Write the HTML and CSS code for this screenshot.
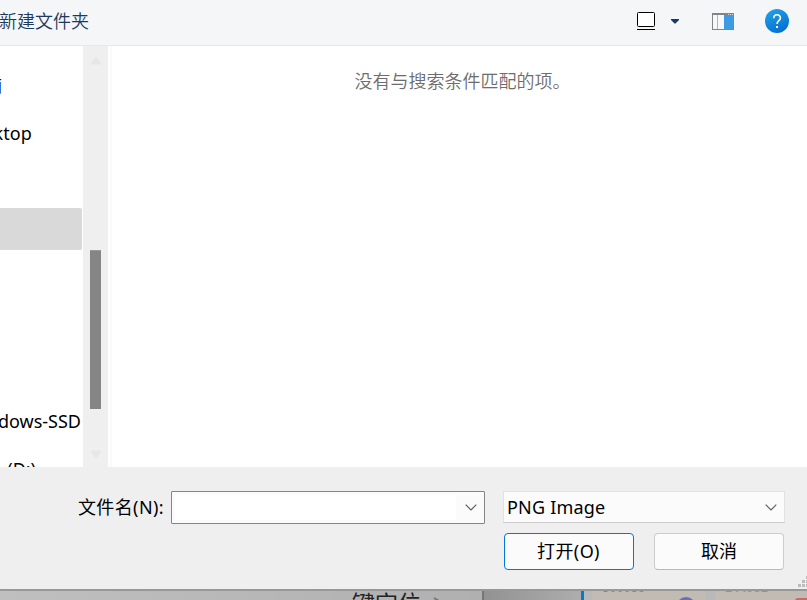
FILE: index.html
```html
<!DOCTYPE html>
<html lang="zh-CN">
<head>
<meta charset="utf-8">
<title>打开</title>
<link rel="stylesheet" href="styles.css">
</head>
<body>
<div class="dialog">
  <header class="toolbar">
    <span class="new-folder">新建文件夹</span>
    <div class="tools">
      <svg class="view-icon" width="24" height="24" viewBox="0 0 24 24"><rect width="24" height="24" rx="2" fill="#f6f5f6"/><rect x="3.500" y="3.500" width="17" height="14" rx="1" fill="#fff" stroke="#000"/><path d="M3 20.500h18" stroke="#000"/></svg>
      <svg class="caret-icon" width="8" height="5" viewBox="0 0 8 5"><path d="M0 0h8v1L4.500 4.500h-1L0 1z" fill="#1e395b"/></svg>
      <svg class="pane-icon" width="22" height="17" viewBox="0 0 22 17"><path d="M0 0h22v17H0z" fill="#818589"/><path d="M1 2h4v14H1zM6 2h6v14H6z" fill="#f8f8f8"/><path d="M5 2h1v14H5z" fill="#b5b5b5"/><path d="M12 2h9v14h-9z" fill="#3f9ae5"/><path d="M16 1.500h1m1 0h1m1 0h1" stroke="#ddd"/></svg>
      <svg class="help-icon" width="24" height="24" viewBox="0 0 24 24"><defs><linearGradient id="help" x1="0" y1="0" x2=".5" y2="1"><stop stop-color="#24a5e8"/><stop offset="1" stop-color="#0673d2"/></linearGradient></defs><circle cx="12" cy="12" r="12" fill="url(#help)"/><path d="M8.800 9.200C8.800 4.700 15.400 4.700 15.400 8.900c0 2.800-3.400 2.700-3.400 6.200" fill="none" stroke="#fff" stroke-width="1.600"/><path d="M11 17h2v2h-2z" fill="#fff"/></svg>
    </div>
  </header>
  <main class="content">
    <nav class="tree">
      <div class="row"><span class="label pc">此电脑</span></div>
      <div class="row"><span class="label desktop">Desktop</span></div>
      <div class="row"></div>
      <div class="row selected"></div>
      <div class="row"></div>
      <div class="row"></div>
      <div class="row"></div>
      <div class="row"><span class="label system">Windows-SSD</span></div>
      <div class="row"><span class="label data">(D:)</span></div>
    </nav>
    <div class="scrollbar">
      <svg class="arrow" width="12" height="9" viewBox="0 0 12 9"><path d="M6 1 11 8H1z" fill="#e7e7e7" stroke="#e7e7e7" stroke-linejoin="round"/></svg>
      <div class="thumb"></div>
      <svg class="arrow down" width="12" height="9" viewBox="0 0 12 9"><path d="M6 8 11 1H1z" fill="#e7e7e7" stroke="#e7e7e7" stroke-linejoin="round"/></svg>
    </div>
    <div class="splitter"></div>
    <section class="files"><span class="empty">没有与搜索条件匹配的项。</span></section>
  </main>
  <footer class="footer">
    <div class="fields">
      <span class="name-label">文件名(N):</span>
      <div class="combo name"><div class="entry"></div><svg class="chevron" width="12" height="7" viewBox="0 0 12 7"><path d="m.7.700 5.300 5.300L11.300.700" fill="none" stroke="#606060" stroke-width="1.200"/></svg></div>
      <div class="combo type"><span class="type-text">PNG Image</span><svg class="chevron" width="12" height="7" viewBox="0 0 12 7"><path d="m.7.700 5.300 5.300L11.300.700" fill="none" stroke="#606060" stroke-width="1.200"/></svg></div>
    </div>
    <div class="buttons">
      <div class="button primary"><span class="open-text">打开(O)</span></div>
      <div class="button"><span class="cancel-text">取消</span></div>
    </div>
    <svg class="grip" width="9" height="11" viewBox="0 0 9 11"><path d="M8 0h1v3H8zM4 4h3v3H4zM8 4h1v3H8zM0 8h3v3H0zM4 8h3v3H4zM8 8h1v3H8z" fill="#bdbdbd"/></svg>
  </footer>
</div>
<div class="backdrop">
  <div class="back-left"><span class="back-text">键定位</span><svg class="back-arrow" width="8" height="8" viewBox="0 0 8 8"><path d="m1 1 5 3-5 3" fill="none" stroke="#777" stroke-width="2"/></svg></div>
  <div class="back-gap"></div>
  <div class="back-right">
    <div class="card"><span class="code blue">300059</span><i class="dot violet"></i></div>
    <div class="card second"><span class="code orange">144952</span><i class="dot red"></i></div>
  </div>
</div>
</body>
</html>
```
FILE: styles.css
```css
* { box-sizing: border-box; }
body {
  margin: 0;
  width: 807px;
  height: 600px;
  overflow: hidden;
  display: flex;
  flex-direction: column;
  font: 18px/24px "Noto Sans", "Noto Sans CJK SC", sans-serif;
  color: #000;
  background: #bbb;
}
svg { display: block; flex: none; }
.dialog { height: 589px; flex: none; display: flex; flex-direction: column; background: #efefef; }
.toolbar {
  height: 46px;
  flex: none;
  display: flex;
  justify-content: space-between;
  background: #f4f6f8;
  border-bottom: 1px solid #e4e7eb;
  color: #1e395b;
}
.new-folder { margin: 8px 0 0 -1px; font-family: "Noto Sans CJK SC", sans-serif; font-weight: 350; white-space: nowrap; }
.tools { display: flex; align-items: flex-start; padding-right: 18px; }
.view-icon { margin-top: 9px; }
.caret-icon { margin: 19px 0 0 13px; }
.pane-icon { margin: 13px 0 0 33px; }
.help-icon { margin: 9px 0 0 31px; }
.content { height: 421px; flex: none; display: flex; overflow: hidden; background: #fff; }
.tree { width: 83px; flex: none; padding-top: 15px; overflow: hidden; }
.row { width: 82px; height: 48px; display: flex; align-items: center; justify-content: flex-end; }
.row.selected { height: 42px; margin: 3px 0; background: #d9d9d9; border-radius: 0 2px 2px 0; }
.label { flex: none; white-space: nowrap; }
.pc { margin-right: 80px; color: #000040; }
.desktop { margin-right: 50px; letter-spacing: .1px; }
.system { margin-right: 1px; }
.data { margin-right: 46px; }
.scrollbar { width: 25px; flex: none; display: flex; flex-direction: column; align-items: center; padding: 10px 0 8px; background: #efefef; }
.arrow.down { margin-top: auto; }
.thumb { width: 11px; height: 159px; margin-top: 185px; background: #858585; border-top: 1px solid #999; }
.splitter { width: 4px; border: solid #fafafa; border-width: 0 2px 0 0; flex: none; }
.files { flex: 1; text-align: center; padding: 22px 0 0 6px; }
.empty { font-family: "Noto Sans CJK SC", sans-serif; font-weight: 350; color: #6d6d6d; }
.footer { flex: 1; position: relative; padding-top: 24px; }
.fields { display: flex; height: 33px; }
.name-label { width: 171px; padding: 4px 7px 0 0; text-align: right; white-space: nowrap; letter-spacing: .4px; }
.combo { display: flex; align-items: center; justify-content: space-between; background: #fbfbfb; }
.name { width: 314px; height: 33px; padding: 0 7px 0 3px; border: 1px solid #858585; border-radius: 1px; }
.entry { width: 281px; height: 25px; background: #fff; }
.type { width: 282px; height: 32px; margin-left: 18px; padding: 0 7px 0 3px; border: 1px solid #e2e2e2; border-bottom-color: #ccc; }
.type-text { white-space: nowrap; letter-spacing: .2px; }
.buttons { display: flex; gap: 20px; margin: 9px 0 0 504px; }
.button { width: 130px; height: 37px; padding-bottom: 1px; display: flex; align-items: center; justify-content: center; background: #fbfbfb; border: 1px solid #ccc; border-bottom-color: #b9b9b9; border-radius: 4px; }
.open-text { letter-spacing: .4px; margin-right: 1px; }
.button.primary { border-color: #0078d4; }
.grip { position: absolute; right: 0; bottom: 2px; }
.backdrop { height: 11px; flex: none; display: flex; overflow: hidden; border-top: 2px solid #989898; }
.back-left { width: 482px; padding-left: 352px; display: flex; background: linear-gradient(90deg, #bfbfbf, #b0b0b0); overflow: hidden; }
.back-text { font-size: 23px; line-height: 24px; color: #242424; white-space: nowrap; flex: none; }
.back-arrow { margin: 6px 0 0 12px; }
.back-gap { width: 99px; background: linear-gradient(90deg, #929292, #adadad); border-left: 2px solid #777; }
.back-right { flex: 1; display: flex; gap: 9px; padding-left: 8px; border-left: 3px solid #0878c8; background: #b9b9ba; }
.card { width: 114px; position: relative; overflow: hidden; background: #c2bbb4; }
.card.second { width: 92px; }
.code { position: absolute; left: 10px; top: -9px; font: bold 12px/14px "Liberation Mono", monospace; }
.blue { color: #8082ac; }
.orange { color: #b98a5e; }
.dot { position: absolute; border-radius: 50%; }
.violet { width: 20px; height: 20px; left: 84px; top: 6px; background: #6870bd; }
.red { width: 20px; height: 8px; left: 80px; top: 7px; border-radius: 3px; background: #c56d62; }
```
